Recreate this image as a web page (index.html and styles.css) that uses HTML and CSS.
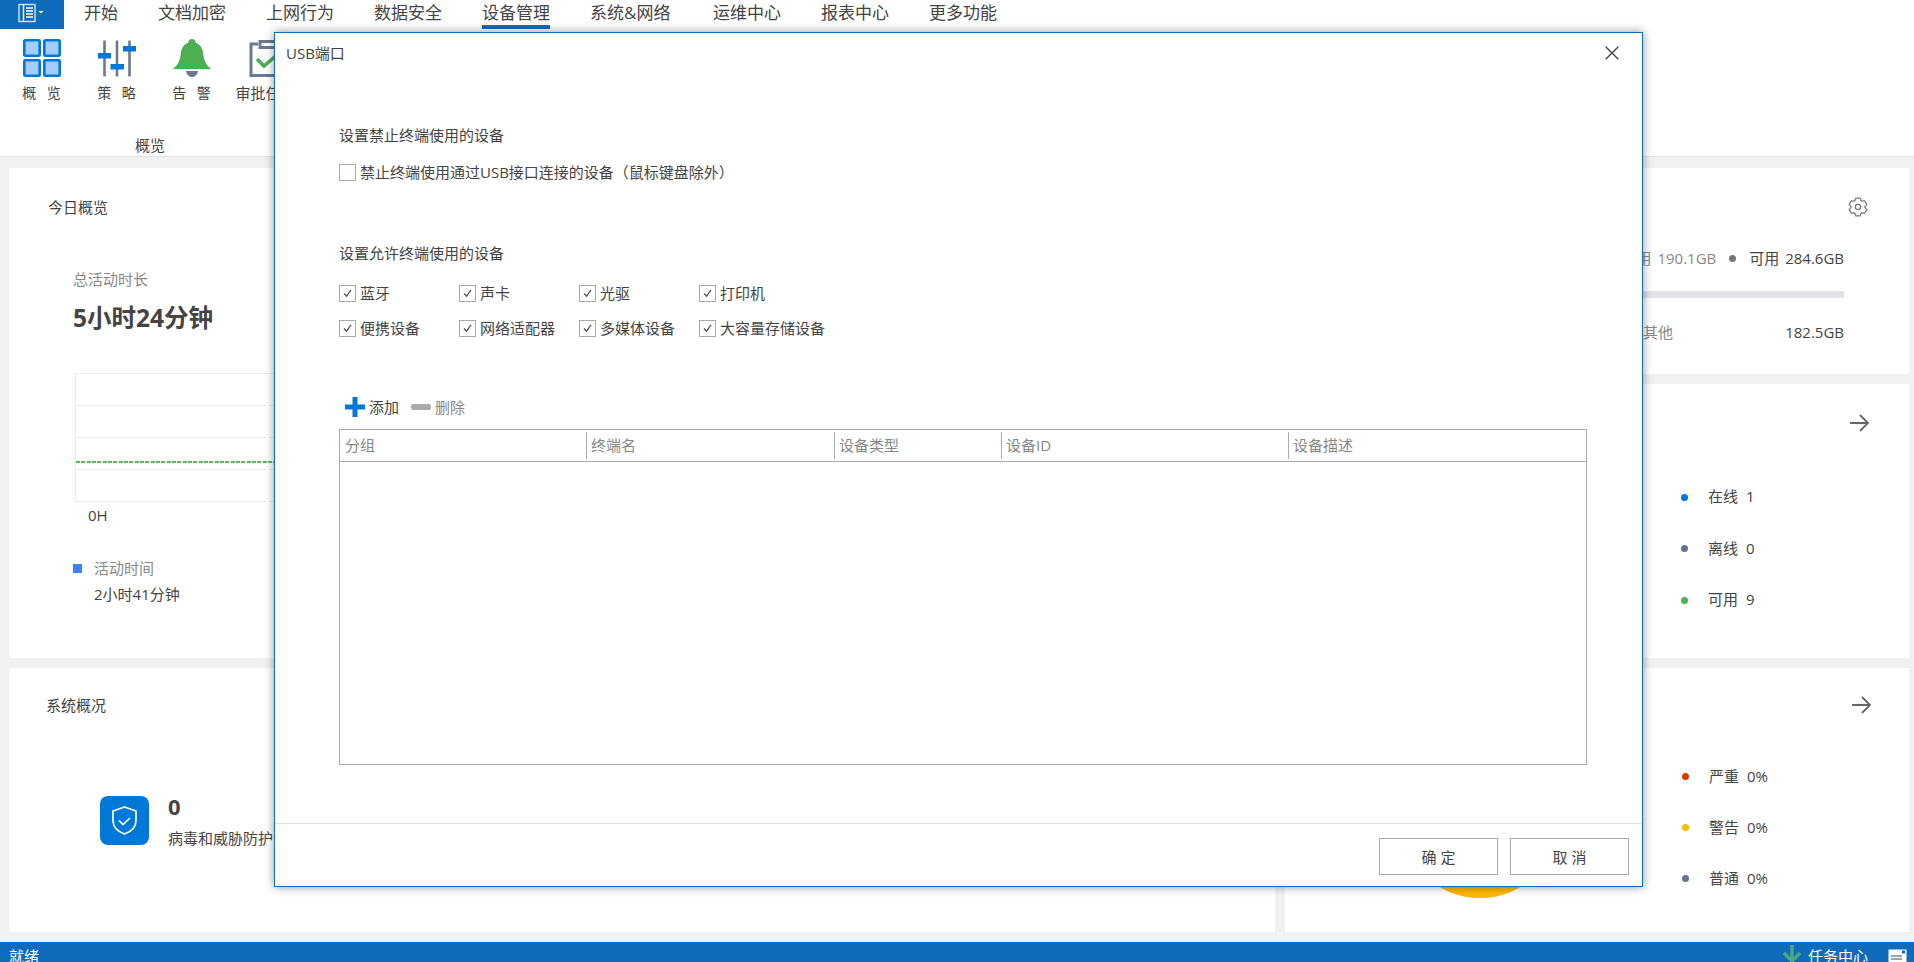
FILE: index.html
```html
<!DOCTYPE html>
<html lang="zh-CN">
<head>
<meta charset="utf-8">
<title>设备管理</title>
<link rel="stylesheet" href="styles.css">
</head>
<body>
<div class="app">
  <nav class="nav">
    <div class="menu-btn">
      <svg class="menu-icon" width="28" height="20" viewBox="0 0 28 20"><rect x="1" y="1.5" width="16" height="17" fill="none" stroke="#cfe4f7" stroke-width="1.4"/><path d="M5.5 1.5v17" stroke="#fff" stroke-width="1.4"/><path d="M8 5h7M8 8h7M8 11h7M8 14h7" stroke="#fff" stroke-width="1.6"/><path d="M20.5 8h5l-2.500 2.600z" fill="#fff"/></svg>
    </div>
    <a class="nav-item">开始</a>
    <a class="nav-item">文档加密</a>
    <a class="nav-item">上网行为</a>
    <a class="nav-item">数据安全</a>
    <a class="nav-item active">设备管理</a>
    <a class="nav-item nav-item-wide">系统&amp;网络</a>
    <a class="nav-item">运维中心</a>
    <a class="nav-item">报表中心</a>
    <a class="nav-item">更多功能</a>
  </nav>

  <header class="ribbon">
    <div class="ribbon-group">
      <div class="tools">
        <div class="tool">
          <svg class="tool-icon" viewBox="0 0 38 38"><g fill="#a3cdfd" stroke="#0078d7" stroke-width="2.600"><rect x="1.300" y="1.300" width="15.400" height="15.400" rx="1"/><rect x="21.300" y="1.300" width="15.400" height="15.400" rx="1"/><rect x="1.300" y="21.300" width="15.400" height="15.400" rx="1"/><rect x="21.300" y="21.300" width="15.400" height="15.400" rx="1"/></g></svg>
          <span class="tool-label">概 览</span>
        </div>
        <div class="tool">
          <svg class="tool-icon" viewBox="0 0 38 38"><path d="M6.500 1.500v36M19 1.500v36M31.500 1.500v36" stroke="#6b7a90" stroke-width="2.600"/><path d="M0 14h13v5.500H0zM12.500 25H26v5.500H12.500zM25 7h13v5.500H25z" fill="#0078d7"/></svg>
          <span class="tool-label">策 略</span>
        </div>
        <div class="tool">
          <svg class="tool-icon" viewBox="0 0 38 38"><path d="M19 0c2.300 0 3.600 1.700 3.800 3.700C29 6 30 11.500 30.500 17c.5 5 3 9 7.500 13H0c4.500-4 7-8 7.500-13C8 11.500 9 6 15.200 3.700 15.400 1.700 16.700 0 19 0z" fill="#4caf50"/><path d="M13 32h12c-.5 3.500-3 6-6 6s-5.500-2.500-6-6z" fill="#6b7a90"/></svg>
          <span class="tool-label">告 警</span>
        </div>
        <div class="tool tool-last">
          <svg class="tool-icon" viewBox="0 0 38 38"><path d="M9 5H2v31.500h34V5h-7" fill="none" stroke="#6b7a90" stroke-width="3"/><path d="M11 2.500h16v6H11z" fill="#fff" stroke="#6b7a90" stroke-width="3"/><path d="M8 20l7 7 14-12" fill="none" stroke="#4caf50" stroke-width="3.600"/></svg>
          <span class="tool-label tool-label-tight">审批任务</span>
        </div>
      </div>
      <div class="group-label">概览</div>
    </div>
  </header>

  <main class="main">
    <div class="col col-left">
      <section class="card card-today">
        <h2 class="card-title">今日概览</h2>
        <div class="today">
          <div class="muted">总活动时长</div>
          <div class="big-number">5小时24分钟</div>
          <div class="chart">
            <div class="chart-row"></div>
            <div class="chart-row"></div>
            <div class="chart-row"></div>
            <div class="chart-row"></div>
            <div class="chart-avg"></div>
          </div>
          <div class="chart-axis">0H</div>
          <div class="legend"><i class="legend-mark"></i><span class="muted">活动时间</span></div>
          <div class="legend-value">2小时41分钟</div>
        </div>
      </section>
      <section class="card card-system">
        <h2 class="card-title card-title-system">系统概况</h2>
        <div class="stat">
          <div class="stat-icon">
            <svg width="25" height="29" viewBox="0 0 25 29"><path d="M12.500 1L24 5v9.500c0 6.500-4.500 11-11.500 13.500C5.500 25.500 1 21 1 14.500V5z" fill="none" stroke="#fff" stroke-width="1.700" stroke-linejoin="round"/><path d="M7 14.500l4 4 7-6.500" fill="none" stroke="#fff" stroke-width="1.700"/></svg>
          </div>
          <div>
            <div class="stat-value">0</div>
            <div class="stat-label">病毒和威胁防护</div>
          </div>
        </div>
      </section>
    </div>

    <div class="col col-right">
      <section class="card card-storage">
        <div class="card-tools card-tools-gear">
          <svg width="20" height="20" viewBox="0 0 24 24"><polygon points="9.500,1.300 14.500,1.300 15.800,4.600 16.500,5 20,4.500 22.500,8.800 20.300,11.600 20.300,12.400 22.500,15.200 20,19.500 16.500,19 15.800,19.400 14.500,22.700 9.500,22.700 8.200,19.400 7.500,19 4,19.500 1.500,15.200 3.700,12.400 3.700,11.600 1.500,8.800 4,4.500 7.500,5 8.200,4.600" fill="none" stroke="#777" stroke-width="1.500" stroke-linejoin="round"/><circle cx="12" cy="12" r="3.200" fill="none" stroke="#777" stroke-width="1.500"/></svg>
        </div>
        <div class="storage-summary">
          <span class="muted">已用 190.1GB</span>
          <i class="storage-dot"></i>
          <span>可用 284.6GB</span>
        </div>
        <div class="storage-bar"></div>
        <div class="storage-row"><span class="muted">其他</span><span>182.5GB</span></div>
      </section>

      <section class="card card-devices">
        <div class="card-tools card-tools-arrow">
          <svg width="19" height="18" viewBox="0 0 19 18"><path d="M0 9h18M10 1l8 8-8 8" fill="none" stroke="#666" stroke-width="1.800"/></svg>
        </div>
        <ul class="status-list status-list-devices">
          <li class="status"><i class="dot dot-blue"></i><span class="status-name">在线</span><span>1</span></li>
          <li class="status"><i class="dot dot-slate"></i><span class="status-name">离线</span><span>0</span></li>
          <li class="status"><i class="dot dot-green"></i><span class="status-name">可用</span><span>9</span></li>
        </ul>
      </section>

      <section class="card card-alerts">
        <div class="card-tools card-tools-arrow2">
          <svg width="19" height="18" viewBox="0 0 19 18"><path d="M0 9h18M10 1l8 8-8 8" fill="none" stroke="#666" stroke-width="1.800"/></svg>
        </div>
        <div class="alerts-body">
          <div class="donut"></div>
          <ul class="status-list status-list-alerts">
            <li class="status"><i class="dot dot-red"></i><span class="status-name">严重</span><span>0%</span></li>
            <li class="status"><i class="dot dot-amber"></i><span class="status-name">警告</span><span>0%</span></li>
            <li class="status"><i class="dot dot-slate"></i><span class="status-name">普通</span><span>0%</span></li>
          </ul>
        </div>
      </section>
    </div>
  </main>

  <footer class="statusbar">
    <span class="status-ready">就绪</span>
    <div class="status-right">
      <svg class="task-arrow" width="18" height="17" viewBox="0 0 18 17"><path d="M9 0v16M1 8l8 8 8-8" fill="none" stroke="#4fa87a" stroke-width="3.400"/></svg>
      <span class="task-text">任务中心</span>
      <svg class="task-box" width="19" height="14" viewBox="0 0 19 14"><rect x=".5" y=".5" width="18" height="14" fill="#fff"/><rect x="14" y="1.500" width="3" height="3" fill="#0f6cbd"/><path d="M3 7h11M3 10h11" stroke="#7a8794" stroke-width="1.400"/></svg>
    </div>
  </footer>
</div>

<div class="dialog" role="dialog">
  <div class="dialog-head">
    <span class="dialog-title">USB端口</span>
    <svg width="14" height="14" viewBox="0 0 14 14"><path d="M.7.700l12.600 12.600M13.300.700L.7 13.300" stroke="#444" stroke-width="1.400"/></svg>
  </div>
  <div class="dialog-body">
    <div class="section-title section-first">设置禁止终端使用的设备</div>
    <label class="check check-single"><span class="box"></span>禁止终端使用通过USB接口连接的设备（鼠标键盘除外）</label>

    <div class="section-title section-second">设置允许终端使用的设备</div>
    <div class="check-grid">
      <label class="check"><span class="box"><svg viewBox="0 0 17 17"><path d="M4.500 8.500l3 3 5-7" fill="none" stroke="#555" stroke-width="1.500"/></svg></span>蓝牙</label>
      <label class="check"><span class="box"><svg viewBox="0 0 17 17"><path d="M4.500 8.500l3 3 5-7" fill="none" stroke="#555" stroke-width="1.500"/></svg></span>声卡</label>
      <label class="check"><span class="box"><svg viewBox="0 0 17 17"><path d="M4.500 8.500l3 3 5-7" fill="none" stroke="#555" stroke-width="1.500"/></svg></span>光驱</label>
      <label class="check"><span class="box"><svg viewBox="0 0 17 17"><path d="M4.500 8.500l3 3 5-7" fill="none" stroke="#555" stroke-width="1.500"/></svg></span>打印机</label>
      <label class="check"><span class="box"><svg viewBox="0 0 17 17"><path d="M4.500 8.500l3 3 5-7" fill="none" stroke="#555" stroke-width="1.500"/></svg></span>便携设备</label>
      <label class="check"><span class="box"><svg viewBox="0 0 17 17"><path d="M4.500 8.500l3 3 5-7" fill="none" stroke="#555" stroke-width="1.500"/></svg></span>网络适配器</label>
      <label class="check"><span class="box"><svg viewBox="0 0 17 17"><path d="M4.500 8.500l3 3 5-7" fill="none" stroke="#555" stroke-width="1.500"/></svg></span>多媒体设备</label>
      <label class="check"><span class="box"><svg viewBox="0 0 17 17"><path d="M4.500 8.500l3 3 5-7" fill="none" stroke="#555" stroke-width="1.500"/></svg></span>大容量存储设备</label>
    </div>

    <div class="toolbar">
      <span class="tb-btn">
        <svg width="20" height="20" viewBox="0 0 20 20"><path d="M7.500 0h5v7.500H20v5h-7.500V20h-5v-7.500H0v-5h7.500z" fill="#0078d7"/></svg>
        添加
      </span>
      <span class="tb-btn tb-btn-off">
        <svg width="20" height="6" viewBox="0 0 20 6"><rect width="20" height="6" rx="2" fill="#aaa"/></svg>
        删除
      </span>
    </div>

    <div class="table">
      <div class="thead">
        <div class="th">分组</div>
        <div class="th">终端名</div>
        <div class="th">设备类型</div>
        <div class="th">设备ID</div>
        <div class="th">设备描述</div>
      </div>
    </div>
  </div>
  <div class="dialog-foot">
    <button class="btn">确 定</button>
    <button class="btn">取 消</button>
  </div>
</div>
</body>
</html>
```

FILE: styles.css
```css
* { box-sizing: border-box; }
html, body { margin: 0; padding: 0; }
body {
  width: 1914px;
  height: 962px;
  overflow: hidden;
  position: relative;
  background: #f1f1f1;
  color: #444;
  font-family: "Open Sans", "Noto Sans CJK SC", sans-serif;
  font-size: 15px;
  line-height: 20px;
}
.app { display: flex; flex-direction: column; height: 962px; }

/* top navigation */
.nav { display: flex; height: 29px; background: #fff; flex: none; }
.menu-btn {
  width: 64px;
  height: 29px;
  background: #0f6cbd;
  margin-right: 20px;
  padding: 3px 0 0 18px;
}
.menu-icon { display: block; }
.nav-item {
  margin-right: 40px;
  font-size: 17px;
  line-height: 26px;
  height: 29px;
  color: #444;
}
.nav-item-wide { margin-right: 42.500px; }
.nav-item.active { border-bottom: 4px solid #0f6cbd; }

/* ribbon */
.ribbon {
  height: 128px;
  flex: none;
  background: #fff;
  border-bottom: 1px solid #e2e2e2;
  padding: 10px 0 0 4px;
}
.ribbon-group { width: 292px; }
.tools { display: flex; }
.tool { width: 75px; flex: none; display: flex; flex-direction: column; align-items: center; }
.tool-last { margin-left: 1px; }
.tool-icon { width: 38px; height: 38px; display: block; }
.tool-label {
  margin-top: 6px;
  font-size: 14px;
  letter-spacing: 3.500px;
  text-indent: 3.500px;
  white-space: nowrap;
  line-height: 20px;
}
.tool-label-tight { letter-spacing: 0; text-indent: 0; font-size: 15px; margin-right: 4px; }
.group-label { margin-top: 32px; text-align: center; line-height: 20px; font-size: 15px; }

/* main */
.main {
  flex: 1;
  display: flex;
  gap: 10px;
  padding: 11px 5px 10px 9px;
  min-height: 0;
}
.col { display: flex; flex-direction: column; gap: 10px; }
.col-left { width: 1266px; }
.col-right { width: 624px; }
.card { background: #fff; }
.card-today { height: 490px; padding: 29px 0 0 39px; }
.card-system { height: 264px; padding: 27px 0 0 37px; }
.card-title { margin: 0; font-size: 15px; font-weight: 400; line-height: 20px; }
.today { padding-left: 25px; margin-top: 52px; }
.muted { color: #888; }
.big-number { margin-top: 12px; font-size: 24.500px; font-weight: 700; line-height: 34px; color: #444; }
.chart {
  position: relative;
  width: 1150px;
  margin: 38px 0 0 2px;
  border-top: 1px solid #eaeaea;
  border-left: 1px solid #eaeaea;
}
.chart-row {
  height: 32px;
  background: repeating-linear-gradient(90deg, #eaeaea 0 6px, transparent 6px 8px) left bottom / 100% 1px no-repeat;
}
.chart-avg {
  position: absolute;
  left: 0;
  right: 0;
  top: 87px;
  height: 2px;
  background: repeating-linear-gradient(90deg, #5cb85c 0 4px, transparent 4px 5.330px);
}
.chart-axis { margin: 3px 0 0 15px; font-size: 15px; }
.legend { display: flex; align-items: center; margin-top: 33px; }
.legend-mark { width: 9px; height: 9px; background: #3b82f6; margin-right: 12px; }
.legend-value { margin: 6px 0 0 21px; }

.stat { display: flex; gap: 19px; margin: 81px 0 0 54px; }
.stat-icon {
  width: 49px;
  height: 49px;
  border-radius: 8px;
  background: #0078d7;
  display: flex;
  align-items: center;
  justify-content: center;
}
.stat-value { font-size: 22px; font-weight: 700; line-height: 20px; }
.stat-label { margin-top: 12px; white-space: nowrap; }

.card-storage { height: 206px; padding: 29px 0 0; }
.card-devices { height: 274px; padding-top: 30px; }
.card-alerts { height: 264px; padding-top: 28px; }
.card-tools { display: flex; justify-content: flex-end; }
.card-tools svg { display: block; }
.card-tools-gear { padding-right: 41px; }
.card-tools-arrow { padding-right: 40px; }
.card-tools-arrow2 { padding-right: 38px; }
.storage-summary {
  display: flex;
  justify-content: flex-end;
  align-items: center;
  margin: 31px 65px 0 0;
  word-spacing: 2px;
}
.storage-dot { width: 7px; height: 7px; border-radius: 50%; background: #777; margin: 0 13px; }
.storage-bar { height: 7px; width: 540px; margin: 23px 65px 0 auto; background: #e1e3e8; }
.storage-row {
  display: flex;
  justify-content: space-between;
  width: 201px;
  margin: 24px 65px 0 auto;
}
.status-list { list-style: none; margin: 0; padding: 0; display: flex; flex-direction: column; }
.status-list-devices { gap: 31.500px; margin: 55px 0 0 396px; }
.status-list-devices span { padding-bottom: 2px; }
.status-list-alerts { gap: 31px; margin: 52px 0 0 122px; }
.status { display: flex; align-items: center; height: 20px; }
.status-name { margin-right: 8px; }
.dot { width: 7px; height: 7px; border-radius: 50%; margin-right: 20px; }
.dot-blue { background: #0078d7; }
.dot-slate { background: #64748f; }
.dot-green { background: #4caf50; }
.dot-red { background: #d83b01; }
.dot-amber { background: #ffb900; }
.alerts-body { display: flex; align-items: flex-start; }
.donut {
  width: 160px;
  height: 160px;
  margin: 24px 0 0 115px;
  border-radius: 50%;
  border: 26px solid #ffb900;
  flex: none;
}

/* status bar */
.statusbar {
  flex: none;
  height: 20px;
  background: #0f6cbd;
  color: #fff;
  display: flex;
  justify-content: space-between;
  padding: 3px 7px 0 9px;
  overflow: hidden;
}
.status-ready { line-height: 22px; }
.status-right { display: flex; align-items: flex-start; }
.task-arrow { margin: 0 7px 0 0; flex: none; }
.task-text { line-height: 22px; margin-right: 20px; font-size: 15px; }
.task-box { margin-top: 4px; flex: none; }

/* dialog */
.dialog {
  position: absolute;
  left: 274px;
  top: 32px;
  width: 1369px;
  height: 855px;
  background: #fff;
  border: 1px solid #106ebe;
  box-shadow: 0 0 9px rgba(0, 0, 0, .42);
  display: flex;
  flex-direction: column;
}
.dialog-head {
  height: 40px;
  flex: none;
  display: flex;
  align-items: center;
  justify-content: space-between;
  padding: 0 23px 0 11px;
}
.dialog-title { font-size: 15px; }
.dialog-body { flex: 1; padding: 0 55px 0 64px; }
.section-title { line-height: 20px; font-size: 15px; }
.section-first { margin-top: 52px; }
.section-second { margin-top: 62px; }
.check {
  display: flex;
  align-items: center;
  height: 17px;
  padding-bottom: 2px;
  font-size: 15px;
  white-space: nowrap;
}
.check-single { margin-top: 19px; }
.box {
  width: 17px;
  height: 17px;
  border: 1px solid #aaa;
  margin: 0 4px -2px 0;
  flex: none;
  display: block;
  background: #fff;
}
.box svg { display: block; width: 15px; height: 15px; }
.check-grid {
  display: grid;
  grid-template-columns: repeat(4, 120px);
  row-gap: 18px;
  margin-top: 22px;
}
.toolbar { display: flex; align-items: center; gap: 12px; height: 20px; margin: 60px 0 0 6px; }
.tb-btn { display: flex; align-items: center; gap: 4px; font-size: 15px; }
.tb-btn-off { color: #888; }
.table { height: 336px; border: 1px solid #aaa; margin-top: 12px; }
.thead {
  display: grid;
  grid-template-columns: 246px 248px 167px 287px 1fr;
  height: 32px;
  border-bottom: 1px solid #aaa;
}
.th {
  position: relative;
  padding-left: 5px;
  line-height: 31px;
  color: #888;
  font-size: 15px;
}
.th + .th::before {
  content: "";
  position: absolute;
  left: 0;
  top: 2px;
  bottom: 2px;
  width: 1px;
  background: #aaa;
}
.dialog-foot {
  height: 63px;
  flex: none;
  border-top: 1px solid #e0e0e0;
  padding: 14px 13px 0 0;
  display: flex;
  justify-content: flex-end;
  gap: 12px;
}
.btn {
  width: 119px;
  height: 37px;
  border: 1px solid #aaa;
  background: #fff;
  color: #444;
  font-family: inherit;
  font-size: 15px;
  letter-spacing: 0;
  padding: 0;
}
```
